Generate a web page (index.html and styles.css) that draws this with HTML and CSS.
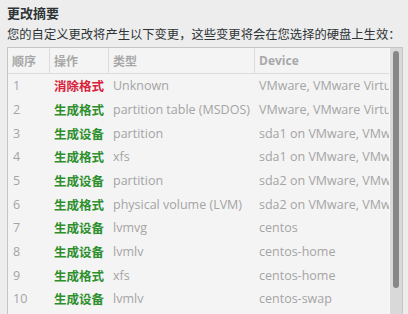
FILE: index.html
```html
<!DOCTYPE html>
<html>
<head>
<meta charset="utf-8">
<link rel="stylesheet" href="styles.css">
</head>
<body>
<div class="page">
  <div class="title">更改摘要</div>
  <div class="subtitle">您的自定义更改将产生以下变更，这些变更将会在您选择的硬盘上生效：</div>
  <div class="frame">
    <div class="list">
      <div class="row head">
        <div class="c c1">顺序</div><div class="c c2">操作</div><div class="c c3">类型</div><div class="c c4">Device</div>
      </div>
      <div class="row"><div class="c c1">1</div><div class="c c2 red">消除格式</div><div class="c c3">Unknown</div><div class="c c4">VMware, VMware Virtual S</div></div>
      <div class="row"><div class="c c1">2</div><div class="c c2 green">生成格式</div><div class="c c3">partition table (MSDOS)</div><div class="c c4">VMware, VMware Virtual S</div></div>
      <div class="row"><div class="c c1">3</div><div class="c c2 green">生成设备</div><div class="c c3">partition</div><div class="c c4">sda1 on VMware, VMware Virtual S</div></div>
      <div class="row"><div class="c c1">4</div><div class="c c2 green">生成格式</div><div class="c c3">xfs</div><div class="c c4">sda1 on VMware, VMware Virtual S</div></div>
      <div class="row"><div class="c c1">5</div><div class="c c2 green">生成设备</div><div class="c c3">partition</div><div class="c c4">sda2 on VMware, VMware Virtual S</div></div>
      <div class="row"><div class="c c1">6</div><div class="c c2 green">生成格式</div><div class="c c3">physical volume (LVM)</div><div class="c c4">sda2 on VMware, VMware Virtual S</div></div>
      <div class="row"><div class="c c1">7</div><div class="c c2 green">生成设备</div><div class="c c3">lvmvg</div><div class="c c4">centos</div></div>
      <div class="row"><div class="c c1">8</div><div class="c c2 green">生成设备</div><div class="c c3">lvmlv</div><div class="c c4">centos-home</div></div>
      <div class="row"><div class="c c1">9</div><div class="c c2 green">生成格式</div><div class="c c3">xfs</div><div class="c c4">centos-home</div></div>
      <div class="row"><div class="c c1">10</div><div class="c c2 green">生成设备</div><div class="c c3">lvmlv</div><div class="c c4">centos-swap</div></div>
      <div class="row"><div class="c c1">11</div><div class="c c2 green">生成格式</div><div class="c c3">swap</div><div class="c c4">centos-swap</div></div>
    </div>
    <div class="scroll"><div class="thumb"></div></div>
  </div>
</div>
</body>
</html>
```
FILE: styles.css
```css
html, body {
  margin: 0;
  padding: 0;
  background: #ededed;
  overflow: hidden;
}
.page {
  width: 408px;
  height: 314px;
  padding: 5px 0 0 7px;
  box-sizing: border-box;
  font-family: "Open Sans", "Noto Sans CJK SC", sans-serif;
  color: #2e3436;
}
.title {
  font-family: "Noto Sans CJK SC", sans-serif;
  font-weight: bold;
  font-size: 13px;
  line-height: 16px;
  color: #2e3436;
}
.subtitle {
  font-family: "Noto Sans CJK SC", sans-serif;
  font-size: 12.3px;
  line-height: 16px;
  margin-top: 5px;
  white-space: nowrap;
  color: #2e3436;
}
.frame {
  margin-top: 5px;
  width: 394px;
  height: 280px;
  border: 1px solid #c6c6c6;
  background: #f4f4f4;
  display: flex;
  overflow: hidden;
}
.list {
  flex: 1;
  overflow: hidden;
}
.row {
  display: grid;
  grid-template-columns: 41px 59px 146px 1fr;
  height: 23.67px;
  align-items: center;
  font-size: 12.5px;
  color: #a4a4a4;
  white-space: nowrap;
}
.row.head {
  height: 25px;
  border-bottom: 1px solid #dcdcdc;
  font-weight: bold;
  color: #a8a8a8;
}
.head .c {
  height: 25px;
  display: flex;
  align-items: center;
  border-left: 1px solid #dcdcdc;
  font-size: 12px;
}
.head .c1 { border-left: none; }
.c {
  padding-left: 5px;
  overflow: hidden;
}
.head .c { padding-left: 4px; }
.c2 {
  font-family: "Noto Sans CJK SC", sans-serif;
}
.head .c2, .head .c1, .head .c3 { font-family: "Noto Sans CJK SC", sans-serif; }
.red { color: #d8213a; font-weight: bold; }
.green { color: #2d8f2d; font-weight: bold; }
.scroll {
  width: 12px;
  flex: none;
  background: #d9d9d9;
  border-left: 1px solid #f8f8f8;
  position: relative;
}
.thumb {
  position: absolute;
  left: 3px;
  top: 3px;
  width: 6px;
  height: 237px;
  border-radius: 3px;
  background: #878787;
}
```
